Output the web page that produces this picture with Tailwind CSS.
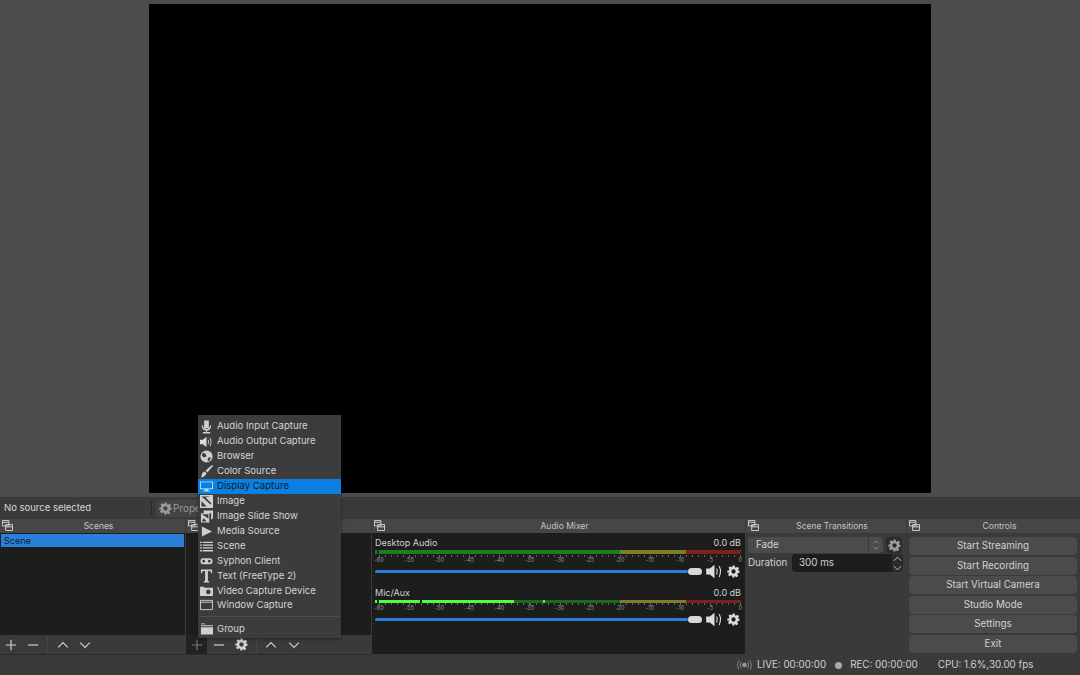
<!DOCTYPE html>
<html lang="en">
<head>
<meta charset="UTF-8">
<title>OBS</title>
<script src="https://cdn.jsdelivr.net/npm/@tailwindcss/browser@4"></script>
</head>
<body class="w-[1080px] h-[675px] overflow-hidden bg-[#3a3a3a] text-[#d2d2d2] font-['Inter','Liberation_Sans',sans-serif] text-[10px] relative">

<svg class="hidden">
  <symbol id="dock" viewBox="0 0 12 12"><path d="M.5.5h7v6h-7zM.5 2.500h7M4 5h7.500v6.500h-7.500zM4 7.500h7.500" fill="none" stroke="#d8d8d8" stroke-width="1"/></symbol>
  <symbol id="gear" viewBox="0 0 24 24"><path fill-rule="evenodd" fill="currentColor" d="M10 1h4l.7 3.300 1.800.8 2.900-1.800 2.800 2.800-1.800 2.900.8 1.800L23 10.500v4l-3.300.7-.8 1.800 1.800 2.900-2.800 2.800-2.900-1.800-1.800.8L14 23h-4l-.7-3.300-1.800-.8-2.900 1.800-2.800-2.800 1.800-2.900-.8-1.800L.500 14.500v-4l3.300-.7.800-1.800L2.800 5.100l2.800-2.800 2.900 1.800 1.800-.8zM12 8a4 4 0 1 0 0 8 4 4 0 0 0 0-8z"/></symbol>
  <symbol id="speaker" viewBox="0 0 20 18"><path fill="#dcdcdc" d="M0 5.500h4.500L10 1v16l-5.500-4.500H0z"/><path fill="none" stroke="#dcdcdc" stroke-width="1.300" d="M12.500 5.500q2 3.500 0 7M15.500 2.500q3.500 6.500 0 13"/></symbol>
  <symbol id="plus" viewBox="0 0 14 14"><path d="M7 1v12M1 7h12" stroke="currentColor" stroke-width="1.400"/></symbol>
  <symbol id="minus" viewBox="0 0 14 14"><path d="M1 7h12" stroke="currentColor" stroke-width="1.400"/></symbol>
  <symbol id="up" viewBox="0 0 14 10"><path d="M1 8l6-6 6 6" fill="none" stroke="currentColor" stroke-width="1.500"/></symbol>
  <symbol id="down" viewBox="0 0 14 10"><path d="M1 2l6 6 6-6" fill="none" stroke="currentColor" stroke-width="1.500"/></symbol>
</svg>

<main class="flex flex-col h-full">
  <!-- preview -->
  <div class="h-[497px] bg-[#4c4c4c] flex justify-center pt-1">
    <div class="w-[782px] h-[489px] bg-black"></div>
  </div>

  <!-- context bar -->
  <div class="h-[22px] flex items-center bg-[#3a3a3a] text-[9.500px] pt-[1px]">
    <span class="w-[150px] pl-1 text-[#d6d6d6]">No source selected</span>
    <div class="w-px h-[15px] bg-[#2a2a2a] ml-px"></div>
    <div class="ml-1 h-[17px] w-[80px] bg-[#444] rounded-sm flex items-center pl-[3px] gap-px text-[#9a9a9a] text-[10px]">
      <svg class="w-[13px] h-[13px] text-[#9c9c9c]"><use href="#gear"/></svg><span>Properties</span>
    </div>
  </div>

  <!-- docks -->
  <div class="h-[136px] flex gap-px">
    <section class="w-[185px] flex flex-col">
      <div class="h-[14px] bg-[#464646] relative text-center pl-3 text-[8.500px] leading-[15px] text-[#c4c4c4]"><svg class="absolute left-[2px] top-px w-[11px] h-[11px]"><use href="#dock"/></svg>Scenes</div>
      <div class="flex-1 bg-[#1d1d1d] pt-px px-px">
        <div class="h-[13px] bg-[#2a7fd9] text-[#0e1c2d] leading-[13px] pl-[3px] text-[9px]">Scene</div>
      </div>
      <div class="h-[20px] bg-[#3a3a3a] border-b border-[#2a2a2a] flex items-center pl-[5px] text-[#cfcfcf]">
        <svg class="w-[12px] h-[12px]"><use href="#plus"/></svg>
        <svg class="w-[12px] h-[12px] ml-[10px]"><use href="#minus"/></svg>
        <div class="w-px h-[15px] ml-[8px] border-l border-dotted border-[#555]"></div>
        <svg class="w-[12px] h-[8px] ml-[9px]"><use href="#up"/></svg>
        <svg class="w-[12px] h-[8px] ml-[10px]"><use href="#down"/></svg>
      </div>
    </section>

    <section class="w-[185px] flex flex-col">
      <div class="h-[14px] bg-[#464646] relative"><svg class="absolute left-[2px] top-px w-[11px] h-[11px]"><use href="#dock"/></svg></div>
      <div class="flex-1 bg-[#1d1d1d]"></div>
      <div class="h-[20px] bg-[#3a3a3a] border-b border-[#2a2a2a] flex items-center text-[#cfcfcf]">
        <div class="w-[21px] h-full bg-[#222] flex items-center pl-[5px] text-[#777]"><svg class="w-[12px] h-[12px]"><use href="#plus"/></svg></div>
        <svg class="w-[12px] h-[12px] ml-[6px]"><use href="#minus"/></svg>
        <svg class="w-[13px] h-[13px] ml-[10px]"><use href="#gear"/></svg>
        <div class="w-px h-[15px] ml-[8px] border-l border-dotted border-[#555]"></div>
        <svg class="w-[12px] h-[8px] ml-[8px]"><use href="#up"/></svg>
        <svg class="w-[12px] h-[8px] ml-[11px]"><use href="#down"/></svg>
      </div>
    </section>

    <section class="w-[373px] flex flex-col">
      <div class="h-[14px] bg-[#464646] relative text-center pl-3 text-[8.500px] leading-[15px] text-[#c4c4c4]"><svg class="absolute left-[2px] top-px w-[11px] h-[11px]"><use href="#dock"/></svg>Audio Mixer</div>
      <div class="flex-1 bg-[#1d1d1d] pl-[3px] pr-[3px] pt-[4px] mb-[1px]">
        <!-- desktop audio -->
        <div class="h-[50px]">
          <div class="flex justify-between h-[12px] items-center text-[9px] pr-[1px]"><span>Desktop Audio</span><span>0.0 dB</span></div>
          <div class="w-[366px] h-[4px] flex mt-[1px]">
            <div class="w-[2px] bg-[#1d7d22]"></div><div class="w-[2px] bg-[#0f3f12]"></div>
            <div class="w-[241px] bg-[#1d7d22]"></div><div class="w-[66px] bg-[#7e7e24]"></div><div class="w-[55px] bg-[#7e2020]"></div>
          </div>
          <div class="w-[362px] ml-[4px] h-[2px] mt-[1px] bg-[repeating-linear-gradient(90deg,#666_0,#666_1px,transparent_1px,transparent_6.020px)]"></div>
          <div class="w-[392px] h-[7px] -ml-[11px] flex text-[5.500px] leading-[7px] text-[#9c9c9c]"><span class="w-[30.100px] text-center">-60</span><span class="w-[30.100px] text-center">-55</span><span class="w-[30.100px] text-center">-50</span><span class="w-[30.100px] text-center">-45</span><span class="w-[30.100px] text-center">-40</span><span class="w-[30.100px] text-center">-35</span><span class="w-[30.100px] text-center">-30</span><span class="w-[30.100px] text-center">-25</span><span class="w-[30.100px] text-center">-20</span><span class="w-[30.100px] text-center">-15</span><span class="w-[30.100px] text-center">-10</span><span class="w-[30.100px] text-center">-5</span><span class="w-[30.100px] text-center">0</span></div>
          <div class="flex items-center h-[15px]">
            <div class="w-[313px] h-[3px] bg-[#2a7fd9] rounded-full"></div>
            <div class="w-[14px] h-[7px] bg-[#d8d8d8] rounded-sm"></div>
            <svg class="w-[17px] h-[15px] ml-[4px]"><use href="#speaker"/></svg>
            <svg class="w-[13px] h-[13px] ml-[4px] text-[#dcdcdc]"><use href="#gear"/></svg>
          </div>
        </div>
        <!-- mic -->
        <div>
          <div class="flex justify-between h-[12px] items-center text-[9px] pr-[1px]"><span>Mic/Aux</span><span>0.0 dB</span></div>
          <div class="w-[366px] h-[2.500px] flex mt-[1px]">
            <div class="w-[2px] bg-[#4dff3f]"></div><div class="w-[2px] bg-[#0f3f12]"></div><div class="w-[41px] bg-[#4dff3f]"></div><div class="w-[2px] bg-black"></div>
            <div class="w-[91.700px] bg-[#4dff3f]"></div><div class="w-[29px] bg-[#1c6a1e]"></div><div class="w-[2.300px] bg-[#4dff3f]"></div><div class="w-[75px] bg-[#1c6a1e]"></div>
            <div class="w-[66px] bg-[#7e7e24]"></div><div class="w-[55px] bg-[#7e2020]"></div>
          </div>
          <div class="w-[362px] ml-[4px] h-[2px] bg-[repeating-linear-gradient(90deg,#666_0,#666_1px,transparent_1px,transparent_6.020px)]"></div>
          <div class="w-[392px] h-[7px] -ml-[11px] flex text-[5.500px] leading-[7px] text-[#9c9c9c]"><span class="w-[30.100px] text-center">-60</span><span class="w-[30.100px] text-center">-55</span><span class="w-[30.100px] text-center">-50</span><span class="w-[30.100px] text-center">-45</span><span class="w-[30.100px] text-center">-40</span><span class="w-[30.100px] text-center">-35</span><span class="w-[30.100px] text-center">-30</span><span class="w-[30.100px] text-center">-25</span><span class="w-[30.100px] text-center">-20</span><span class="w-[30.100px] text-center">-15</span><span class="w-[30.100px] text-center">-10</span><span class="w-[30.100px] text-center">-5</span><span class="w-[30.100px] text-center">0</span></div>
          <div class="flex items-center h-[15px]">
            <div class="w-[313px] h-[3px] bg-[#2a7fd9] rounded-full"></div>
            <div class="w-[14px] h-[7px] bg-[#d8d8d8] rounded-sm"></div>
            <svg class="w-[17px] h-[15px] ml-[4px]"><use href="#speaker"/></svg>
            <svg class="w-[13px] h-[13px] ml-[4px] text-[#dcdcdc]"><use href="#gear"/></svg>
          </div>
        </div>
      </div>
    </section>

    <section class="w-[160px] flex flex-col">
      <div class="h-[14px] bg-[#464646] relative text-center pl-3 text-[8.500px] leading-[15px] text-[#c4c4c4]"><svg class="absolute left-[2px] top-px w-[11px] h-[11px]"><use href="#dock"/></svg>Scene Transitions</div>
      <div class="pl-[2px] pt-[4px] text-[9.800px]">
        <div class="flex gap-[3px] h-[16px]">
          <div class="w-[135px] bg-[#4b4b4b] rounded-sm flex items-center pl-[8px] relative">Fade<span class="absolute right-0 top-0 h-full w-[15px] border-l border-[#3a3a3a] text-[#bbb] flex flex-col items-center justify-center gap-[2px]"><svg class="w-[6px] h-[4px]"><use href="#up"/></svg><svg class="w-[6px] h-[4px]"><use href="#down"/></svg></span></div>
          <div class="w-[16px] bg-[#2b2b2b] rounded-sm flex items-center justify-center text-[#9c9c9c]"><svg class="w-[13px] h-[13px]"><use href="#gear"/></svg></div>
        </div>
        <div class="flex h-[18px] mt-[1px] items-center">
          <span class="w-[44px]">Duration</span>
          <div class="w-[100px] h-[18px] bg-[#1d1d1d] rounded-l-sm pl-[7px] leading-[17px]">300 ms</div>
          <div class="w-[11px] h-full flex flex-col items-center justify-center gap-[3px] text-[#d0d0d0] bg-[#2b2b2b] rounded-r-sm">
            <svg class="w-[9px] h-[6px]"><use href="#up"/></svg>
            <svg class="w-[9px] h-[6px]"><use href="#down"/></svg>
          </div>
        </div>
      </div>
    </section>

    <section class="flex-1 flex flex-col">
      <div class="h-[14px] bg-[#464646] relative text-center pl-3 text-[8.500px] leading-[15px] text-[#c4c4c4]"><svg class="absolute left-[2px] top-px w-[11px] h-[11px]"><use href="#dock"/></svg>Controls</div>
      <div class="pl-[2px] pr-[3px] pt-[4px] flex flex-col gap-[1.500px] text-[9.800px] text-center">
        <div class="h-[18px] leading-[18px] bg-[#4b4b4b] rounded-sm">Start Streaming</div>
        <div class="h-[18px] leading-[18px] bg-[#4b4b4b] rounded-sm">Start Recording</div>
        <div class="h-[18px] leading-[18px] bg-[#4b4b4b] rounded-sm">Start Virtual Camera</div>
        <div class="h-[18px] leading-[18px] bg-[#4b4b4b] rounded-sm">Studio Mode</div>
        <div class="h-[18px] leading-[18px] bg-[#4b4b4b] rounded-sm">Settings</div>
        <div class="h-[18px] leading-[18px] bg-[#4b4b4b] rounded-sm">Exit</div>
      </div>
    </section>
  </div>

  <!-- status bar -->
  <footer class="flex-1 flex items-center text-[9.800px] pl-[737px] text-[#d0d0d0]">
    <svg class="w-[15px] h-[12px]" viewBox="0 0 16 12"><circle cx="8" cy="6" r="2.500" fill="#999"/><path d="M4.500 2.500q-2 3.500 0 7M11.500 2.500q2 3.500 0 7M2 1q-3 5 0 10M14 1q3 5 0 10" fill="none" stroke="#888"/></svg>
    <span class="ml-[5px]">LIVE: 00:00:00</span>
    <span class="w-[7px] h-[7px] rounded-full bg-[#aaa] ml-[9px]"></span>
    <span class="ml-[8px]">REC: 00:00:00</span>
    <span class="ml-[20px]">CPU: 1.6%,30.00 fps</span>
  </footer>
</main>

<!-- add source menu -->
<nav class="absolute left-[198px] top-[415px] w-[143px] h-[223px] bg-[#3c3c3c] pt-[4px] text-[9.600px] text-[#d4d4d4] shadow-[0_1px_3px_rgba(0,0,0,.4)]">
  <div class="h-[15px] flex items-center gap-[4px] pl-[2px]"><svg class="w-[13px] h-[14px]" viewBox="0 0 14 14"><path fill="#d0d0d0" d="M4.500 0h5v8h-5zM2 5h1c0 5 8 5 8 0h1c0 4-2 5.500-4.500 6v1.500H11v1.500H3v-1.500h3.500V11C4 10.500 2 9 2 5z"/></svg><span>Audio Input Capture</span></div>
  <div class="h-[15px] flex items-center gap-[4px] pl-[2px]"><svg class="w-[13px] h-[12px]"><use href="#speaker"/></svg><span>Audio Output Capture</span></div>
  <div class="h-[15px] flex items-center gap-[4px] pl-[2px]"><svg class="w-[13px] h-[13px]" viewBox="0 0 14 14"><circle cx="7" cy="7" r="6.500" fill="#d0d0d0"/><path fill="#3c3c3c" d="M3 3l3 1 1 3-3 1-2-2zM9 8l3 0-2 4-2-1z"/></svg><span>Browser</span></div>
  <div class="h-[15px] flex items-center gap-[4px] pl-[2px]"><svg class="w-[13px] h-[13px]" viewBox="0 0 14 14"><path fill="#d0d0d0" d="M13 0l1 1-6 7-2-2zM5 7l2 2c-1 3-4 5-6 4 1-1 1-2 1-3s2-3 3-3z"/></svg><span>Color Source</span></div>
  <div class="h-[15px] flex items-center gap-[4px] pl-[2px] bg-[#0a80e2] text-[#101c28]"><svg class="w-[13px] h-[13px]" viewBox="0 0 14 13"><path fill="#b9dcf7" d="M0 1h14v8.500H0zM5 9.500h4V11h2v1H3v-1h2z"/><path fill="#0a80e2" d="M1 2h12v6.500H1z"/></svg><span>Display Capture</span></div>
  <div class="h-[15px] flex items-center gap-[4px] pl-[2px]"><svg class="w-[13px] h-[13px]" viewBox="0 0 13 13"><path fill="#d0d0d0" d="M0 0h13v13H0z"/><path fill="#3c3c3c" d="M1.500 1.500h9l-5 1 6 6-1 1-9-8zM1.500 6l5 5.500h-5z"/></svg><span>Image</span></div>
  <div class="h-[15px] flex items-center gap-[4px] pl-[2px]"><svg class="w-[13px] h-[13px]" viewBox="0 0 14 13"><path fill="#d0d0d0" d="M4 0h10v8l-2 2V3H4zM1 3h9v10H1z"/><path fill="#3c3c3c" d="M2 4h7v5L5 6zM4 8l3 4H2z"/></svg><span>Image Slide Show</span></div>
  <div class="h-[15px] flex items-center gap-[4px] pl-[2px]"><svg class="w-[13px] h-[13px]" viewBox="0 0 14 13"><path fill="#d0d0d0" d="M2 1l11 5.500L2 12z"/></svg><span>Media Source</span></div>
  <div class="h-[15px] flex items-center gap-[4px] pl-[2px]"><svg class="w-[13px] h-[12px]" viewBox="0 0 14 13"><path fill="none" stroke="#d0d0d0" stroke-width="1.500" d="M0 1.500h2M3 1.500h11M0 4.500h2M3 4.500h11M0 7.500h2M3 7.500h11M0 10.500h2M3 10.500h11"/></svg><span>Scene</span></div>
  <div class="h-[14.700px] flex items-center gap-[4px] pl-[2px]"><svg class="w-[13px] h-[12px]" viewBox="0 0 14 13"><rect x="0.500" y="3.500" width="13" height="6.500" rx="3" fill="#d0d0d0"/><circle cx="4" cy="6.700" r="1.500" fill="#3c3c3c"/><circle cx="10" cy="6.700" r="1.500" fill="#3c3c3c"/></svg><span>Syphon Client</span></div>
  <div class="h-[14.700px] flex items-center gap-[4px] pl-[2px]"><svg class="w-[13px] h-[14px]" viewBox="0 0 14 14"><path fill="#d0d0d0" d="M1 0h12v4h-1c0-2-1-2.500-3.500-2.500V12L10 13v1H4v-1l1.500-1V1.500C3 1.500 2 2 2 4H1z"/></svg><span>Text (FreeType 2)</span></div>
  <div class="h-[14.700px] flex items-center gap-[4px] pl-[2px]"><svg class="w-[13px] h-[12px]" viewBox="0 0 14 13"><path fill="#d0d0d0" fill-rule="evenodd" d="M0 2h4l1 1h9v9H0zM9 5a2.500 2.500 0 1 0 0 5 2.500 2.500 0 0 0 0-5z"/></svg><span>Video Capture Device</span></div>
  <div class="h-[14.700px] flex items-center gap-[4px] pl-[2px]"><svg class="w-[13px] h-[12px]" viewBox="0 0 14 13"><path fill="none" stroke="#d0d0d0" d="M.5 1.500h13v10H.5zM.5 3.500h13"/></svg><span>Window Capture</span></div>
  <div class="h-px bg-[#4e4e4e] mx-[1px] mt-[3px] mb-[5px]"></div>
  <div class="h-[15px] flex items-center gap-[4px] pl-[2px]"><svg class="w-[13px] h-[14px]" viewBox="0 0 14 14"><path fill="#d0d0d0" d="M1 1h4l1 1h-5zM1 3h13v1H1zM1 5h13v8H1z"/></svg><span>Group</span></div>
</nav>
</body>
</html>
